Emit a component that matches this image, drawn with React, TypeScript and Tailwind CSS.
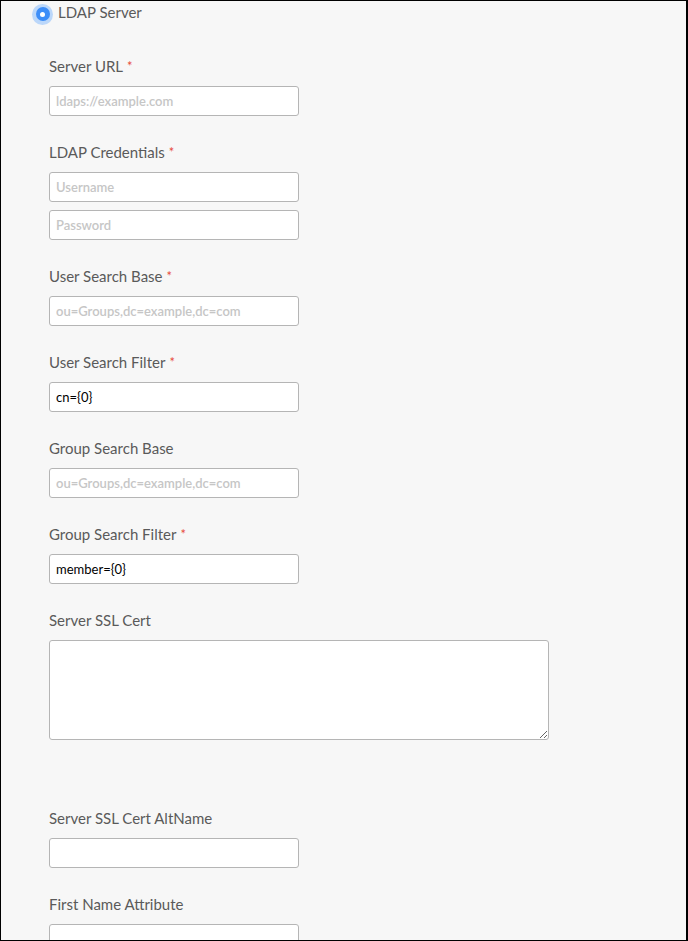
const font = { fontFamily: 'Lato, "Open Sans", sans-serif' }

interface FieldProps {
  label: string
  required?: boolean
  children: React.ReactNode
  className?: string
}

const Field = ({ label, required, children, className }: FieldProps) => (
  <div className={className ?? 'mb-[27px]'}>
    <div className="h-5 mb-[9px] text-[15px] leading-[18px] text-[#5a5a5a]">
      {label}
      {required && <span className="ml-1 text-[#e74c3c] text-[13px] align-top">*</span>}
    </div>
    <div className="flex flex-col gap-2">{children}</div>
  </div>
)

const Input = ({ placeholder, value }: { placeholder?: string; value?: string }) => (
  <input
    type="text"
    readOnly
    placeholder={placeholder}
    defaultValue={value}
    style={font}
    className="w-[250px] h-[30px] px-[6px] text-[13px] text-black bg-white border border-[#b5b5b5] rounded-[3px] placeholder:text-[#c6c6c6] placeholder:font-semibold outline-none"
  />
)

export default function App() {
  return (
    <div
      style={font}
      className="w-[688px] h-[941px] overflow-hidden bg-[#f7f7f7] border border-black border-r-2"
    >
      {/* RADIO */}
      <div className="flex items-center h-[26px] pl-[31px]">
        <span className="w-[21px] h-[21px] rounded-full bg-[#4a9bff]/35 flex items-center justify-center">
          <span className="w-[14px] h-[14px] rounded-full bg-[#3d8ef8] flex items-center justify-center">
            <span className="w-[5px] h-[5px] rounded-full bg-white" />
          </span>
        </span>
        <span className="ml-[5px] -mt-[3px] text-[15px] text-[#5a5a5a]">LDAP Server</span>
      </div>

      {/* FORM */}
      <div className="pl-[48px] pt-[30px]">
        <Field label="Server URL" required>
          <Input placeholder="ldaps://example.com" />
        </Field>
        <Field label="LDAP Credentials" required>
          <Input placeholder="Username" />
          <Input placeholder="Password" />
        </Field>
        <Field label="User Search Base" required>
          <Input placeholder="ou=Groups,dc=example,dc=com" />
        </Field>
        <Field label="User Search Filter" required>
          <Input value="cn={0}" />
        </Field>
        <Field label="Group Search Base">
          <Input placeholder="ou=Groups,dc=example,dc=com" />
        </Field>
        <Field label="Group Search Filter" required>
          <Input value="member={0}" />
        </Field>
        <Field label="Server SSL Cert" className="mb-[69px]">
          <textarea
            readOnly
            className="block w-[500px] h-[100px] bg-white border border-[#b5b5b5] rounded-[3px] outline-none"
          />
        </Field>
        <Field label="Server SSL Cert AltName">
          <Input />
        </Field>
        <Field label="First Name Attribute">
          <Input />
        </Field>
      </div>
    </div>
  )
}
